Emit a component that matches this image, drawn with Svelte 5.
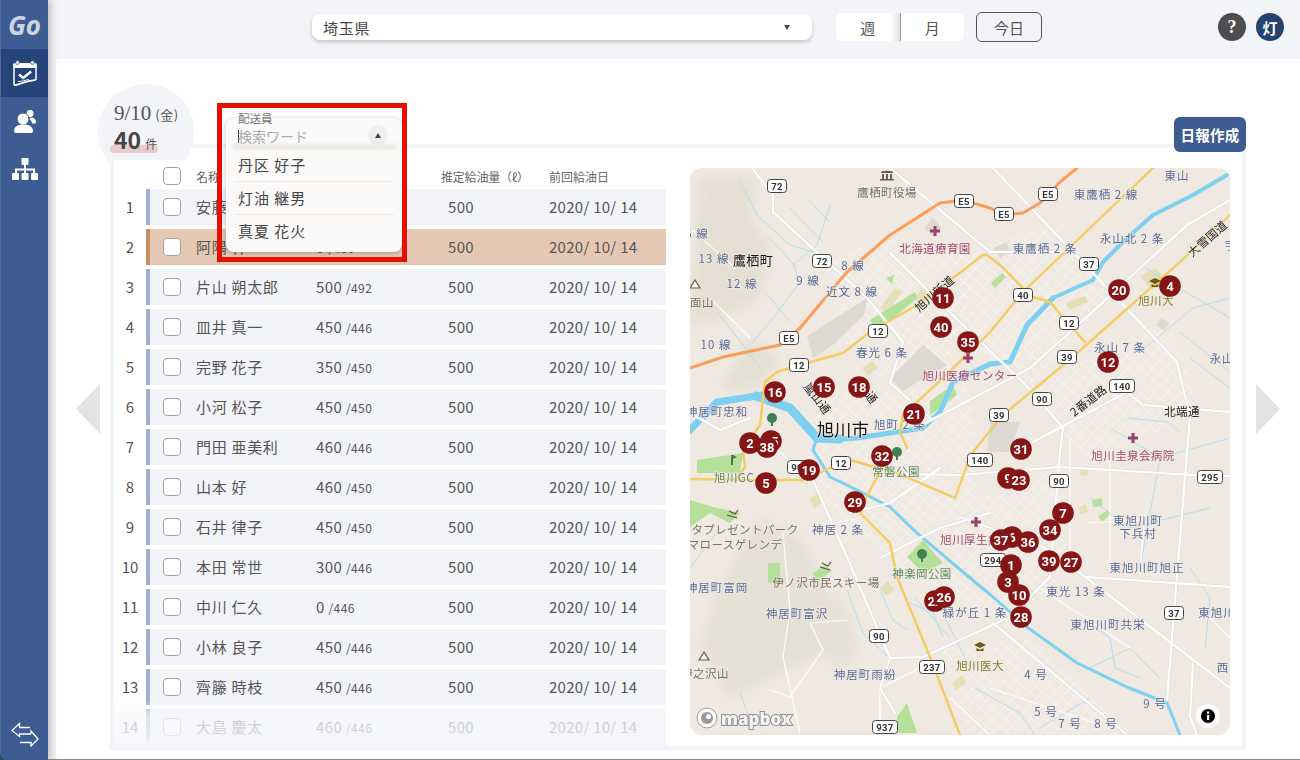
<script lang="ts">
  const rows = [
    { name: "安藤 健", amount: "450", cap: "/450" },
    { name: "阿隅 祥", amount: "0", cap: "/450", active: true },
    { name: "片山 朔太郎", amount: "500", cap: "/492" },
    { name: "皿井 真一", amount: "450", cap: "/446" },
    { name: "完野 花子", amount: "350", cap: "/450" },
    { name: "小河 松子", amount: "450", cap: "/450" },
    { name: "門田 亜美利", amount: "460", cap: "/446" },
    { name: "山本 好", amount: "460", cap: "/450" },
    { name: "石井 律子", amount: "450", cap: "/450" },
    { name: "本田 常世", amount: "300", cap: "/446" },
    { name: "中川 仁久", amount: "0", cap: "/446" },
    { name: "小林 良子", amount: "450", cap: "/446" },
    { name: "齊籐 時枝", amount: "450", cap: "/446" },
    { name: "大島 慶太", amount: "460", cap: "/446" },
  ];

  const drivers = ["丹区 好子", "灯油 継男", "真夏 花火"];

  // map coordinates are relative to the 540x567 map box
  const yellowRoads = [
    "M73 230 75 214 87 204 110 197 153 185 180 164 227 137 267 107 293 87 297 87 310 97 333 120 343 129 360 134 377 154 395 174",
    "M217 280 210 264 213 247 253 210 300 164 333 124 463 0",
    "M277 295 283 284 313 247 377 194 490 94 540 47",
    "M280 289 265 330 207 305 160 292 140 300 113 312 67 312 0 311",
    "M73 230 70 257 53 282 55 299 47 310",
    "M200 282 187 309 175 332 170 345 200 375 207 409 240 489 270 567",
  ];
  const whiteRoads = [
    "M62 0 83 27 83 44 177 130 213 174 200 215 240 250",
    "M200 0 300 84 383 84 487 194 500 250 497 284 477 532",
    "M303 0 383 84",
    "M540 32 497 57 410 137 340 200 270 237 230 258",
    "M200 85 270 154 343 224 373 260 370 284 360 409 320 449 270 472 233 489 200 490 157 389 123 312 87 282",
    "M215 306 270 307 370 299 503 307 540 308",
    "M343 274 437 224 453 237 540 244",
    "M270 349 353 379 390 405 540 520",
    "M397 409 540 419",
    "M303 455 437 567",
    "M503 495 500 549 507 567",
    "M0 245 30 262 60 250",
    "M200 490 190 520 205 545",
    "M160 345 200 335 250 300",
    "M190 390 250 360 300 345",
  ];
  const minorRoads = [
    "M93 365 100 442 93 489 110 565",
    "M80 522 100 529 133 482 120 455 157 452",
    "M190 565 190 520 230 500",
    "M380 270 380 400 M420 280 420 400 M397 355 450 352 M455 345 450 405",
    "M300 520 420 560 M260 530 300 567",
    "M350 420 440 480 M520 450 540 470",
    "M20 130 60 170 M0 60 45 100 M120 360 170 350",
  ];
  const rivers = [
    { d: "M0 262 27 234 73 227", w: 7 },
    { d: "M66 228 100 240 127 270 150 271", w: 9 },
    { d: "M150 271 167 270 233 260 250 244 263 214 300 196 320 194 337 157 363 130", w: 5 },
    { d: "M363 130 403 112 413 94 437 70 463 47 503 27 537 7", w: 4 },
    { d: "M127 270 123 282 140 309 167 322 200 339 227 365 267 399 303 429 337 459 387 495 437 519 477 535 490 567", w: 3 },
  ];
  const streams = [
    "M50 14 67 47 100 77 123 84",
    "M140 37 127 77 103 97 110 114 80 154 63 174",
    "M100 40 133 74 M117 30 140 54 M77 67 107 100",
    "M27 144 43 164 70 200 M75 124 100 154",
    "M450 184 503 140 540 130 M490 164 540 204",
    "M437 250 477 254 490 264 M420 260 470 290 540 270 M470 290 450 400",
    "M400 330 440 360 520 340",
    "M380 440 420 470 425 500 450 510 M400 500 440 480 470 510",
    "M500 400 520 430 515 480 M400 530 350 560 M285 520 330 545 345 567",
    "M50 524 60 552 M157 422 173 465 197 488 M0 400 30 360",
    "M190 422 203 452 217 462 M220 435 243 445 253 469",
    "M455 100 540 150 M500 190 540 220",
    "M250 440 280 500 M225 430 260 470",
  ];
  const greens = [
    "180,152 225,124 227,130 187,165",
    "7,292 53,285 50,305 7,305",
    "0,332 23,339 50,345 40,355 20,345 0,359",
    "217,389 233,372 253,395 233,405",
    "78,395 90,395 90,415 78,415",
    "207,549 217,535 227,565 207,565",
    "240,233 263,217 267,227 240,247",
    "122,406 135,397 142,403 128,412",
    "196,110 204,107 202,116",
    "301,115 312,105 316,109 305,120",
    "408,348 418,342 421,346 412,354",
    "402,332 412,330 412,338 403,339",
  ];
  const sands = [
    "190,140 205,120 212,124 197,146",
    "224,130 232,120 238,126 230,136",
    "172,200 182,193 188,200 178,207",
    "270,170 280,165 284,172 274,178",
    "450,108 465,100 478,112 462,122",
    "375,135 395,128 398,134 380,142",
    "120,330 128,325 132,335 124,340",
    "262,515 272,507 276,515 266,522",
    "190,420 198,412 204,422 196,428",
    "388,340 396,336 398,344 390,346",
    "390,300 398,298 398,307 391,308",
  ];
  const blocks = [
    "117,168 177,130 174,147 143,177 123,190",
    "200,210 233,177 257,197 213,223",
    "243,50 252,60 243,68 234,60",
    "303,80 317,74 320,84 310,90",
    "300,254 330,254 320,284 297,284",
    "470,150 480,155 474,162 466,158",
  ];

  const labels = [
    { x: 197, y: 24, t: "鷹栖町役場", c: "brown" },
    { x: 245, y: 80, t: "北海道療育園", c: "med" },
    { x: 7, y: 65, t: "5 線", c: "blue" },
    { x: 24, y: 90, t: "13 線", c: "blue" },
    { x: 63, y: 91, t: "鷹栖町", c: "town" },
    { x: 163, y: 97, t: "8 線", c: "blue" },
    { x: 118, y: 112, t: "9 線", c: "blue" },
    { x: 52, y: 115, t: "12 線", c: "blue" },
    { x: 162, y: 123, t: "近文 8 線", c: "blue" },
    { x: 12, y: 134, t: "面山", c: "brown" },
    { x: 26, y: 176, t: "10 線", c: "blue" },
    { x: 192, y: 184, t: "春光 6 条", c: "blue" },
    { x: 280, y: 207, t: "旭川医療センター", c: "med" },
    { x: 27, y: 243, t: "神居町忠和", c: "blue" },
    { x: 210, y: 256, t: "旭町 2 条", c: "blue" },
    { x: 153, y: 260, t: "旭川市", c: "city" },
    { x: 487, y: 7, t: "東山", c: "blue" },
    { x: 416, y: 26, t: "東鷹栖 2 線", c: "blue" },
    { x: 442, y: 70, t: "永山北 2 条", c: "blue" },
    { x: 355, y: 80, t: "東鷹栖 2 条", c: "blue" },
    { x: 541, y: 77, t: "宇", c: "blue" },
    { x: 466, y: 132, t: "旭川大", c: "edu" },
    { x: 430, y: 179, t: "永山 7 条", c: "blue" },
    { x: 532, y: 190, t: "永山", c: "blue" },
    { x: 492, y: 243, t: "北端通", c: "road" },
    { x: 443, y: 287, t: "旭川圭泉会病院", c: "med" },
    { x: 44, y: 309, t: "旭川GC", c: "park" },
    { x: 206, y: 303, t: "常磐公園", c: "park" },
    { x: 55, y: 361, t: "タプレゼントパーク", c: "brown" },
    { x: 45, y: 376, t: "マロースゲレンデ", c: "brown" },
    { x: 148, y: 361, t: "神居 2 条", c: "blue" },
    { x: 286, y: 371, t: "旭川厚生病院", c: "med" },
    { x: 232, y: 405, t: "神楽岡公園", c: "park" },
    { x: 27, y: 419, t: "神居町富岡", c: "blue" },
    { x: 136, y: 414, t: "伊ノ沢市民スキー場", c: "brown" },
    { x: 107, y: 445, t: "神居町富沢", c: "blue" },
    { x: 285, y: 444, t: "緑が丘 1 条", c: "blue" },
    { x: 15, y: 505, t: "伊之沢山", c: "brown" },
    { x: 175, y: 506, t: "神居町雨紛", c: "blue" },
    { x: 290, y: 497, t: "旭川医大", c: "edu" },
    { x: 448, y: 352, t: "東旭川町", c: "blue" },
    { x: 448, y: 365, t: "下兵村", c: "blue" },
    { x: 457, y: 399, t: "東旭川町旭正", c: "blue" },
    { x: 386, y: 423, t: "東光 13 条", c: "blue" },
    { x: 527, y: 444, t: "東旭川", c: "blue" },
    { x: 418, y: 456, t: "東旭川町共栄", c: "blue" },
    { x: 533, y: 499, t: "西", c: "blue" },
    { x: 346, y: 506, t: "4 号", c: "blue" },
    { x: 465, y: 535, t: "9 号", c: "blue" },
    { x: 356, y: 543, t: "5 号", c: "blue" },
    { x: 380, y: 555, t: "7 号", c: "blue" },
    { x: 416, y: 555, t: "8 号", c: "blue" },
  ];
  const slanted = [
    { x: 244, y: 125, t: "旭川新道", r: -41 },
    { x: 128, y: 230, t: "嵐山通", r: 52 },
    { x: 182, y: 229, t: "通", r: 52 },
    { x: 517, y: 70, t: "大雪国道", r: -41 },
    { x: 398, y: 232, t: "2番道路", r: -38 },
  ];
  const shields = [
    [87, 18, "72"], [132, 93, "72"], [274, 33, "E5"], [99, 170, "E5"],
    [188, 163, "12"], [109, 197, "12"], [358, 26, "E5"], [314, 46, "E5"],
    [399, 96, "37"], [333, 127, "40"], [379, 155, "12"], [377, 189, "39"],
    [432, 218, "140"], [352, 231, "90"], [309, 247, "39"], [107, 299, "90"],
    [151, 295, "12"], [290, 292, "140"], [189, 468, "90"], [242, 499, "237"],
    [195, 559, "937"], [369, 313, "90"], [520, 309, "295"], [303, 392, "294"],
    [484, 445, "37"],
  ];
  const crosses = [[245, 63], [278, 190], [443, 270], [286, 354]];
  const trees = [[82, 252], [207, 286], [232, 388]];
  const hats = [[465, 115], [290, 479]];
  const peaks = [[5, 116], [14, 488]];
  const skis = [[43, 344], [136, 396]];

  const pins = [
    [253, 130, "11"], [251, 159, "40"], [278, 174, "35"], [429, 122, "20"],
    [480, 118, "4"], [418, 194, "12"], [85, 224, "16"], [134, 219, "15"],
    [169, 219, "18"], [224, 246, "21"], [60, 275, "2"], [81, 273, "25"],
    [77, 279, "38"], [331, 281, "31"], [192, 288, "32"], [119, 302, "19"],
    [318, 310, "9"], [329, 312, "23"], [76, 315, "5"], [165, 334, "29"],
    [373, 345, "7"], [360, 362, "34"], [322, 369, "6"], [311, 372, "37"],
    [338, 374, "36"], [359, 393, "39"], [381, 394, "27"], [321, 397, "1"],
    [318, 414, "3"], [329, 427, "10"], [331, 449, "28"], [245, 433, "22"],
    [254, 429, "26"],
  ];
</script>

<div class="app">
  <nav class="sidebar">
    <div class="logo">Go</div>
    <a class="nav-item active" aria-label="予定">
      <svg viewBox="0 0 24 26" width="24" height="26" fill="none">
        <rect x="0" y="3" width="24" height="5" rx="2" fill="#fff" />
        <circle cx="4.500" cy="2.500" r="1.900" fill="#fff" stroke="#25457a" stroke-width="0.8" />
        <circle cx="19.500" cy="2.500" r="1.900" fill="#fff" stroke="#25457a" stroke-width="0.8" />
        <path d="M1 7v18M23 7v13" stroke="#fff" stroke-width="1.500" />
        <path d="M1 25.300c7-.5 9-4.300 22-5.500" stroke="#fff" stroke-width="1.700" />
        <path d="M6 14.500l4.200 3.500 8-6.500" stroke="#fff" stroke-width="2.500" />
        <path d="M5 21.500c4 .2 7-1.500 11-2" stroke="#fff" stroke-width="1" />
      </svg>
    </a>
    <a class="nav-item" aria-label="顧客">
      <svg viewBox="0 0 22 23" width="22" height="23" fill="#fff">
        <circle cx="16" cy="3.500" r="3.500" />
        <path d="M17 7.500c2.800 0 5 2 5 4.500 0 1-.8 1.500-1.800 1.500H18c-.2-2-1.200-3.500-2.800-4.500z" />
        <circle cx="9" cy="9" r="6" stroke="#3c5c92" stroke-width="1" />
        <path d="M0 21c0-4.500 4-6.500 9.500-6.500S19 16.500 19 21c0 1.300-.8 2-2 2H2c-1.200 0-2-.7-2-2z" />
      </svg>
    </a>
    <a class="nav-item" aria-label="組織">
      <svg viewBox="0 0 26 22" width="26" height="22" fill="#fff">
        <rect x="9.500" y="0" width="7" height="7" rx="1" />
        <rect x="0" y="15" width="7" height="7" rx="1" />
        <rect x="9.500" y="15" width="7" height="7" rx="1" />
        <rect x="19" y="15" width="7" height="7" rx="1" />
        <path d="M12 7h2v3.500h9V15h-2v-2.500h-7V15h-2v-2.500H5V15H3v-4.500h9z" />
      </svg>
    </a>
    <a class="nav-toggle" aria-label="切替">
      <svg viewBox="0 0 28 25" width="28" height="25" fill="none" stroke="#fff" stroke-width="1.300" stroke-linejoin="miter">
        <path d="M19 5.500H8.500V1.500L1 8.500l7.500 6V12H20" />
        <path d="M20 12V9l7 8-7 7v-3.500H9" />
      </svg>
    </a>
  </nav>

  <main class="main">
    <header class="topbar">
      <div class="pref-select">
        <span>埼玉県</span>
        <span class="pref-caret"></span>
      </div>
      <div class="range-toggle">
        <span class="range-week">週</span>
        <span>月</span>
      </div>
      <button class="today" type="button">今日</button>
      <div class="top-icons">
        <span class="round help">?</span>
        <span class="round user">灯</span>
      </div>
    </header>

    <section class="content">
      <div class="gutter left"><span class="arrow arrow-left"></span></div>

      <div class="panel">
        <div class="date-badge">
          <div class="date-line">9/10<small>(金)</small></div>
          <div class="count-line"><b>40</b><small>件</small></div>
        </div>
        <button class="report" type="button">日報作成</button>

        <div class="panel-inner">
          <div class="list">
            <div class="list-head">
              <span class="check"></span>
              <span class="head-name">名称</span>
              <span class="head-amount"></span>
              <span class="head-est">推定給油量（ℓ）</span>
              <span class="head-date">前回給油日</span>
            </div>
            {#each rows as row, i}
              <div class="row-wrap">
                <span class="row-no">{i + 1}</span>
                <div class="row" class:active={row.active}>
                  <span class="check"></span>
                  <span class="cell-name">{row.name}</span>
                  <span class="cell-amount">{row.amount} <small>{row.cap}</small></span>
                  <span class="cell-est">500</span>
                  <span class="cell-date">2020/ 10/ 14</span>
                </div>
              </div>
            {/each}
            <div class="list-fade"></div>
          </div>

          <div class="map">
            <svg viewBox="0 0 540 567" width="540" height="567">
              <defs>
                <filter id="soft" x="-20%" y="-20%" width="140%" height="140%">
                  <feGaussianBlur stdDeviation="6" />
                </filter>
                <pattern id="cityGrid" width="9" height="9" patternUnits="userSpaceOnUse" patternTransform="rotate(42)">
                  <path d="M0 0H9M0 0V9" stroke="#fff" stroke-width="0.9" opacity="0.7" />
                </pattern>
              </defs>
              <rect width="540" height="567" fill="#efe9e2" />
              <g fill="#e4dfd2" filter="url(#soft)">
                <path d="M10 10h55l-5 40 20 30-10 50-50 25H0z" />
                <path d="M60 170l30 20-20 30-40 0z" />
                <path d="M70 350l40 20 30 60 10 50-50 20-60 30-30-50 20-60z" opacity="0.8" />
                <path d="M150 420l20 60-20 30-20-40z" opacity="0.7" />
              </g>

              <g fill="url(#cityGrid)">
                <polygon points="130,90 210,70 290,90 260,200 190,210 150,170" />
                <polygon points="270,90 370,50 420,130 340,220 270,170" />
                <polygon points="120,225 280,220 290,330 370,300 380,400 320,460 240,420 180,380 130,330" />
                <polygon points="340,220 480,150 510,240 400,300" />
                <polygon points="250,480 340,470 440,567 280,567" />
              </g>

              {#each blocks as b}<polygon points={b} fill="#dcd9d2" />{/each}
              {#each sands as s}<polygon points={s} fill="#e4dfb6" />{/each}
              {#each greens as g}<polygon points={g} fill="#b5e09a" />{/each}

              <g fill="none" stroke="#a9dcf3" stroke-width="0.9">
                {#each streams as s}<path d={s} />{/each}
              </g>
              <g fill="none" stroke="#7dd0f0" stroke-linecap="round" stroke-linejoin="round">
                {#each rivers as r}<path d={r.d} stroke-width={r.w} />{/each}
              </g>

              <g fill="none" stroke-linejoin="round" stroke-linecap="round">
                {#each minorRoads as d}
                  <path {d} stroke="#fff" stroke-width="1.200" opacity="0.9" />
                {/each}
                {#each whiteRoads as d}
                  <path {d} stroke="#dcdade" stroke-width="3.200" />
                {/each}
                {#each whiteRoads as d}
                  <path {d} stroke="#fff" stroke-width="2.200" />
                {/each}
                {#each yellowRoads as d}
                  <path {d} stroke="#f4cd62" stroke-width="2.400" />
                {/each}
                <path d="M0 200 33 189 90 177 110 160 157 104 200 67 250 35 273 32 300 40 313 47 333 45 350 35 370 14 387 0" stroke="#fa9f5b" stroke-width="3" />
              </g>

              {#each labels as l}
                <text x={l.x} y={l.y} class="lbl {l.c}" text-anchor="middle" dominant-baseline="central">{l.t}</text>
              {/each}
              {#each slanted as l}
                <text transform="translate({l.x} {l.y}) rotate({l.r})" class="lbl slant" text-anchor="middle" dominant-baseline="central">{l.t}</text>
              {/each}

              {#each crosses as [x, y]}
                <path d="M{x - 1.500} {y - 5}h3v3.500h3.500v3h-3.500v3.500h-3v-3.500h-3.500v-3h3.500z" fill="#9c3f68" />
              {/each}
              {#each trees as [x, y]}
                <g fill="#3f7f52">
                  <circle cx={x} cy={y - 2} r="5" />
                  <rect x={x - 1} y={y} width="2" height="6" />
                </g>
              {/each}
              {#each hats as [x, y]}
                <path d="M{x - 6} {y - 2}l6-3 6 3-6 3zM{x - 3.500} {y + 1}v3h7v-3l-3.500 1.700z" fill="#6e5a10" />
              {/each}
              {#each peaks as [x, y]}
                <path d="M{x - 5} {y + 4}l5-8 5 8z" fill="#f6f2ea" stroke="#6e5f4f" stroke-width="1.200" />
              {/each}
              {#each skis as [x, y]}
                <path d="M{x - 6} {y + 3}l10 3M{x - 4} {y - 1}l6 3 3-4" fill="none" stroke="#5b5145" stroke-width="1.200" />
              {/each}
              <path d="M192 3h10v1h1v1h-12v-1h1zM192 6h2v5h-2zM196 6h2v5h-2zM200 6h2v5h-2zM190 11h14v1.500h-14z" fill="#6b5f50" />
              <path d="M41 287h2v10h-2zM43 287l4 2-4 2z" fill="#4a7a4a" />

              {#each shields as [x, y, t]}
                {@const w = String(t).length > 2 ? 25 : 19}
                <rect x={x - w / 2} y={y - 6.500} width={w} height="13" rx="3" fill="#fff" stroke="#444" stroke-width="1" />
                <text {x} {y} class="shield" text-anchor="middle" dominant-baseline="central">{t}</text>
              {/each}

              {#each pins as [x, y, t]}
                <circle cx={x} cy={y} r="10.800" fill="#861515" />
                <text {x} {y} class="pin" text-anchor="middle" dominant-baseline="central">{t}</text>
              {/each}

              <g>
                <circle cx="17" cy="550" r="10" fill="#fff" opacity="0.8" stroke="#8b8b8b" stroke-width="1" />
                <circle cx="17" cy="550" r="6" fill="#9a9a9a" />
                <circle cx="18.500" cy="548.500" r="2.500" fill="#fff" />
                <text x="31" y="550" class="mapbox" dominant-baseline="central">mapbox</text>
              </g>
              <circle cx="518" cy="548" r="12" fill="#fff" opacity="0.85" />
              <circle cx="518" cy="548" r="7" fill="#000" />
              <rect x="517" y="547" width="2.200" height="5" fill="#fff" />
              <rect x="517" y="543.500" width="2.200" height="2.200" fill="#fff" />
            </svg>
          </div>
        </div>

        <div class="driver-menu">
          <span class="menu-label">配送員</span>
          <div class="menu-input">
            <span class="caret-line"></span>
            <span>検索ワード</span>
            <span class="menu-toggle"><i></i></span>
          </div>
          <div class="menu-shade"></div>
          {#each drivers as d}
            <div class="menu-item">{d}</div>
          {/each}
        </div>
        <div class="highlight-box"></div>
      </div>

      <div class="gutter right"><span class="arrow arrow-right"></span></div>
    </section>
    <div class="bottom-edge"></div>
  </main>
</div>

<style>
  :global(body) {
    margin: 0;
    background: #f3f4f8;
  }

  .app {
    display: flex;
    width: 1300px;
    height: 760px;
    overflow: hidden;
    background: #27595a;
    font-family: "Noto Sans CJK JP", "Noto Sans", sans-serif;
    color: #444;
  }

  .sidebar {
    position: relative;
    width: 48px;
    flex-shrink: 0;
    box-sizing: border-box;
    display: flex;
    flex-direction: column;
    background: #3c5c92;
    border-left: 1px dotted #5b78a8;
    border-bottom-left-radius: 8px;
    box-shadow: 3px 0 7px rgba(60, 60, 70, 0.28);
    z-index: 2;
  }

  .logo {
    height: 49px;
    display: flex;
    align-items: center;
    justify-content: center;
    font-family: "Open Sans", sans-serif;
    font-weight: 700;
    font-style: italic;
    font-size: 26px;
    color: #cdd5e3;
  }

  .nav-item {
    height: 48px;
    display: flex;
    align-items: center;
    justify-content: center;
  }

  .nav-item.active {
    background: #25457a;
  }

  .nav-toggle {
    margin-top: auto;
    height: 38px;
    display: flex;
    align-items: flex-start;
    justify-content: center;
  }

  .main {
    flex: 1;
    min-width: 0;
    display: flex;
    flex-direction: column;
    background: #f3f4f8;
  }

  .topbar {
    height: 59px;
    flex-shrink: 0;
    display: flex;
    align-items: center;
    padding-left: 264px;
    padding-bottom: 5px;
    box-sizing: border-box;
  }

  .pref-select {
    width: 500px;
    height: 26px;
    box-sizing: border-box;
    padding: 0 22px 0 11px;
    display: flex;
    align-items: center;
    justify-content: space-between;
    background: #fff;
    border-radius: 8px;
    box-shadow: 0 2px 4px rgba(0, 0, 0, 0.2);
    font-size: 15px;
    letter-spacing: 0.7px;
    color: #444;
  }

  .pref-caret {
    width: 0;
    height: 0;
    border-left: 3px solid transparent;
    border-right: 3px solid transparent;
    border-top: 5px solid #444;
  }

  .range-toggle {
    width: 128px;
    height: 28px;
    margin-left: 24px;
    display: flex;
    background: #fff;
    border-radius: 6px;
    font-size: 15px;
    color: #555;
    overflow: hidden;
  }

  .range-toggle span {
    flex: 1;
    display: flex;
    align-items: center;
    justify-content: center;
  }

  .range-week {
    border-right: 1px solid #999;
    background: linear-gradient(90deg, #fff 85%, #e2e2e2);
  }

  .today {
    width: 66px;
    height: 30px;
    margin-left: 12px;
    padding: 0;
    background: transparent;
    border: 1px solid #555;
    border-radius: 6px;
    font: inherit;
    font-size: 15px;
    color: #555;
  }

  .top-icons {
    margin-left: auto;
    margin-right: 16px;
    display: flex;
    gap: 10px;
  }

  .round {
    width: 28px;
    height: 28px;
    border-radius: 50%;
    display: flex;
    align-items: center;
    justify-content: center;
    color: #fff;
    font-weight: 700;
    font-size: 15px;
  }

  .help {
    background: #4d4d4d;
    font-family: "Liberation Serif", serif;
    font-size: 18px;
  }

  .user {
    background: #24446f;
  }

  .content {
    flex: 1;
    min-height: 0;
    display: flex;
    margin-left: 8px;
    background: #fff;
  }

  .bottom-edge {
    height: 1px;
    flex-shrink: 0;
    background: #8a8a8a;
  }

  .gutter {
    width: 54px;
    flex-shrink: 0;
    box-sizing: border-box;
    display: flex;
    align-items: center;
  }

  .gutter.left {
    justify-content: flex-end;
    padding-right: 10px;
  }

  .gutter.right {
    padding-left: 10px;
  }

  .arrow {
    width: 0;
    height: 0;
    border-top: 25px solid transparent;
    border-bottom: 25px solid transparent;
  }

  .arrow-left {
    border-right: 24px solid #e3e3e3;
  }

  .arrow-right {
    border-left: 24px solid #e3e3e3;
  }

  .panel {
    position: relative;
    flex: 1;
    min-width: 0;
    margin: 85px 0 9px;
    box-sizing: border-box;
    padding: 4px;
    background: #f3f4f8;
  }

  .panel-inner {
    position: relative;
    height: 100%;
    display: flex;
    background: #fff;
  }

  .date-badge {
    position: absolute;
    left: -12px;
    top: -60px;
    width: 96px;
    height: 96px;
    box-sizing: border-box;
    padding: 15px 0 0 16px;
    border-radius: 50%;
    background: #f3f4f8;
    z-index: 1;
  }

  .date-line {
    font-family: "Liberation Serif", "Noto Sans CJK JP", serif;
    font-size: 21px;
    line-height: 28px;
    color: #555;
    white-space: nowrap;
  }

  .date-line small {
    margin-left: 4px;
    font-family: "Noto Sans CJK JP", sans-serif;
    font-size: 13px;
    letter-spacing: 0.5px;
  }

  .count-line {
    position: relative;
    margin-top: -3px;
    line-height: 27px;
    height: 27px;
    color: #444;
  }

  .count-line::before {
    content: "";
    position: absolute;
    left: -4px;
    top: 19px;
    width: 48px;
    height: 8px;
    border-radius: 4px;
    background: #e8cccc;
  }

  .count-line b {
    position: relative;
    font-size: 23px;
  }

  .count-line small {
    position: relative;
    font-size: 12px;
    margin-left: 4px;
    color: #555;
  }

  .report {
    position: absolute;
    right: 0;
    top: -27px;
    width: 72px;
    height: 35px;
    padding: 0;
    border: 0;
    border-radius: 6px;
    background: #3c5c92;
    color: #fff;
    font: inherit;
    font-weight: 700;
    font-size: 14.500px;
    letter-spacing: 0.3px;
    z-index: 2;
  }

  .list {
    position: relative;
    z-index: 1;
    width: 552px;
    flex-shrink: 0;
    margin-top: 12px;
    background: #fff;
    overflow: hidden;
  }

  .list-head {
    height: 29px;
    display: flex;
    align-items: center;
    font-size: 12px;
    color: #666;
    padding-left: 49px;
    padding-top: 3px;
    box-sizing: border-box;
  }

  .head-name {
    width: 120px;
    margin-left: 15px;
  }

  .head-amount {
    width: 125px;
  }

  .head-est {
    width: 108px;
    letter-spacing: -0.2px;
    white-space: nowrap;
  }

  .row-wrap {
    display: flex;
    height: 36px;
    margin-bottom: 4px;
  }

  .row-no {
    width: 32px;
    flex-shrink: 0;
    text-align: center;
    font-size: 15px;
    line-height: 35px;
    color: #555;
  }

  .row {
    flex: 1;
    display: flex;
    align-items: center;
    box-sizing: border-box;
    padding-left: 13px;
    border-left: 4px solid #9eafcf;
    background: #f3f4f8;
    font-size: 15px;
    color: #555;
  }

  .row.active {
    background: #e5c8b3;
    border-left-color: #c98d5f;
  }

  .check {
    width: 18px;
    height: 18px;
    flex-shrink: 0;
    box-sizing: border-box;
    border: 1px solid #a3a3a3;
    border-radius: 4px;
    background: #fff;
  }

  .cell-name,
  .cell-amount,
  .cell-est,
  .cell-date {
    align-self: flex-start;
    line-height: 35px;
    white-space: nowrap;
  }

  .cell-name {
    width: 120px;
    margin-left: 15px;
    letter-spacing: 0.7px;
  }

  .cell-amount {
    width: 132px;
    letter-spacing: 0.4px;
  }

  .cell-amount small {
    font-size: 12px;
  }

  .cell-est {
    width: 101px;
    letter-spacing: 0.3px;
  }

  .cell-date {
    letter-spacing: 0.27px;
  }

  .list-fade {
    position: absolute;
    left: 0;
    right: 0;
    bottom: 0;
    height: 46px;
    background: linear-gradient(rgba(246, 247, 250, 0), rgba(246, 247, 250, 0.72) 35%, rgba(246, 247, 250, 0.78) 70%, #f5f6f9);
  }

  .map {
    width: 540px;
    height: 567px;
    margin: 20px 0 0 24px;
    border-radius: 12px;
    overflow: hidden;
    font-size: 0;
  }

  .lbl {
    font-size: 11.500px;
    letter-spacing: 0.4px;
    stroke: #f1ebe4;
    stroke-width: 2px;
    paint-order: stroke;
    stroke-opacity: 0.6;
  }

  .lbl.blue { fill: #5c6b99; letter-spacing: 1px; }
  .lbl.brown { fill: #7b6f62; }
  .lbl.med { fill: #a4496f; }
  .lbl.park { fill: #5a8a60; }
  .lbl.edu { fill: #8a7a2a; }
  .lbl.road, .lbl.slant { fill: #222; }
  .lbl.town { fill: #111; font-size: 13px; }
  .lbl.city { fill: #111; font-size: 17px; }

  .shield {
    font-family: "Roboto", sans-serif;
    font-weight: 700;
    font-size: 9.500px;
    letter-spacing: 0.3px;
    fill: #333;
  }

  .pin {
    font-family: "Roboto", sans-serif;
    font-weight: 700;
    font-size: 13px;
    fill: #fff;
  }

  .mapbox {
    font-family: "Open Sans", sans-serif;
    font-weight: 800;
    font-size: 17px;
    fill: #f4f4f4;
    stroke: #8e8e8e;
    stroke-width: 2px;
    paint-order: stroke;
  }

  .driver-menu {
    position: absolute;
    left: 116px;
    top: -26px;
    width: 176px;
    height: 134px;
    box-sizing: border-box;
    padding: 0 8px;
    background: #fcfaf9;
    border-radius: 8px;
    box-shadow: 0 1px 4px rgba(0, 0, 0, 0.28);
    z-index: 3;
  }

  .menu-label {
    position: absolute;
    left: 12px;
    top: -7px;
    font-size: 11.500px;
    line-height: 14px;
    color: #777;
  }

  .menu-input {
    height: 31px;
    margin-left: 4px;
    padding-top: 5px;
    box-sizing: border-box;
    display: flex;
    align-items: center;
    font-size: 14px;
    color: #aaa;
    position: relative;
  }

  .caret-line {
    width: 1px;
    height: 13px;
    background: #444;
    margin-right: -1px;
  }

  .menu-toggle {
    position: absolute;
    right: 6px;
    top: 7px;
    width: 20px;
    height: 20px;
    border-radius: 50%;
    background: #f0efee;
    display: flex;
    align-items: center;
    justify-content: center;
  }

  .menu-toggle i {
    width: 0;
    height: 0;
    border-left: 3.500px solid transparent;
    border-right: 3.500px solid transparent;
    border-bottom: 5px solid #444;
  }

  .menu-shade {
    height: 0;
    box-shadow: 0 0 4px 2px rgba(150, 150, 130, 0.22);
    transform: translateY(-2px);
  }

  .menu-item {
    height: 33px;
    box-sizing: border-box;
    padding: 0 4px 2px;
    display: flex;
    align-items: center;
    font-size: 15px;
    letter-spacing: 1px;
    color: #444;
    border-bottom: 1px solid #ece8e6;
  }

  .menu-item:last-child {
    border-bottom: 0;
  }

  .highlight-box {
    position: absolute;
    left: 107px;
    top: -41px;
    width: 190px;
    height: 159px;
    box-sizing: border-box;
    border: 5px solid #e60f00;
    z-index: 4;
  }
</style>
